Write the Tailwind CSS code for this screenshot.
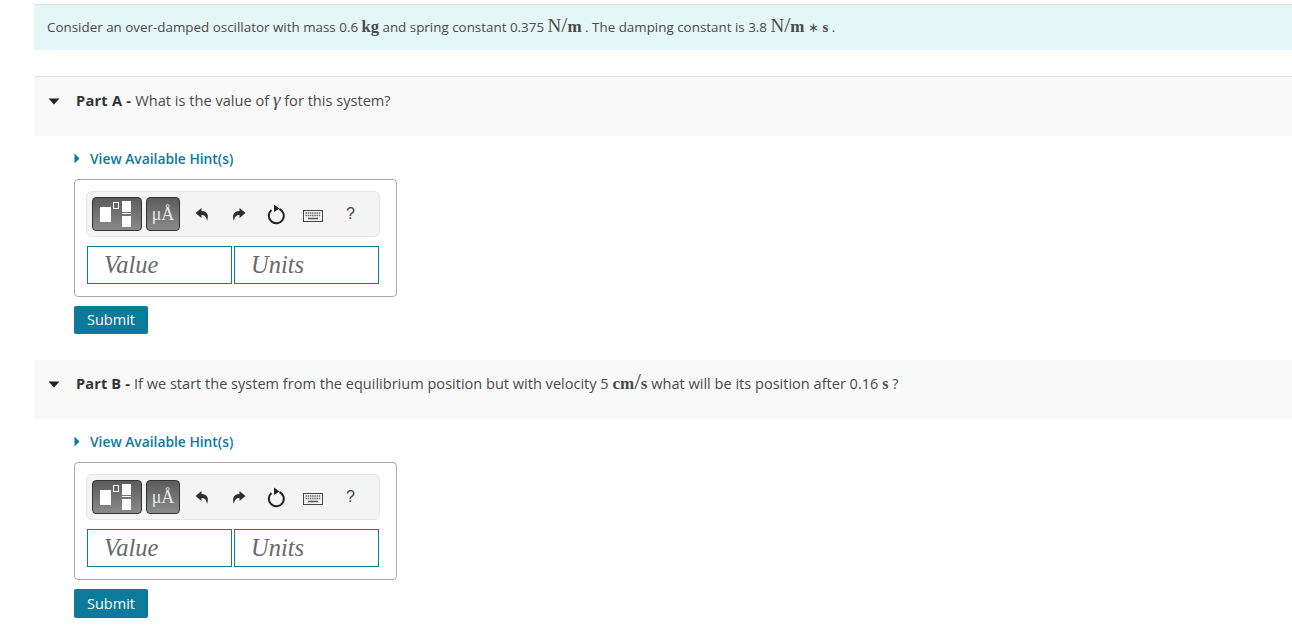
<!DOCTYPE html>
<html lang="en">
<head>
<meta charset="UTF-8">
<title>Over-damped oscillator</title>
<script src="https://cdn.jsdelivr.net/npm/@tailwindcss/browser@4"></script>
</head>
<body class="bg-white overflow-hidden font-['Open_Sans',sans-serif] text-[13.4px] text-[#4a4a4a]">
<main class="pl-[34px] pt-[4px]">

  <!-- problem intro -->
  <div class="h-[46px] border-t border-[#e0e0e0] bg-[#e5f6f6] pl-[13px] pb-[2px] flex items-center">
    <p class="whitespace-pre leading-[20px]">Consider an over-damped oscillator with mass 0.6 <span class="font-['Liberation_Serif',serif] text-[16.5px] font-bold">kg</span> and spring constant 0.375 <span class="font-['Liberation_Serif',serif] text-[19px]">N<span class="text-[22px] font-light">/</span><span class="font-bold text-[17px]">m</span></span> . The damping constant is 3.8 <span class="font-['Liberation_Serif',serif] text-[19px]">N<span class="text-[22px]">/</span><span class="font-bold text-[17px]">m</span></span> <span class="font-['Liberation_Serif',serif] text-[13px]">∗</span> <span class="font-['Liberation_Serif',serif] font-bold text-[15px]">s</span> .</p>
  </div>

  <!-- part A -->
  <section class="mt-[26px]">
    <div class="h-[60px] border-t border-[#e0e0e0] bg-[#f8f8f8] flex items-start pt-[13px]">
      <svg class="ml-[14px] mt-[8px] w-[12px] h-[7px]" viewBox="0 0 12 7"><path d="M0.5 0.5H11.5L6 6.5Z" fill="#222"/></svg>
      <p class="ml-[16px] text-[14.6px] leading-[20px] whitespace-pre"><b class="font-bold text-[#333] tracking-[0.25px]">Part A - </b>What is the value of <span class="font-['Liberation_Serif',serif] italic text-[19px] leading-[18px]">γ</span> for this system?</p>
    </div>
    <div class="ml-[40px] mt-[14px] h-[19px] flex items-center">
      <svg class="w-[6px] h-[11px] mb-[3px]" viewBox="0 0 6 11"><path d="M0.5 0.5L5.5 5.5L0.5 10.5Z" fill="#0b7a9b"/></svg>
      <a class="ml-[10px] text-[13.8px] font-semibold text-[#0b7a9b]">View Available Hint(s)</a>
    </div>
    <div class="ml-[40px] mt-[10px] w-[323px] h-[118px] border border-[#a8a8a8] rounded-[4px] pt-[11px] pl-[11px]">
      <div class="w-[294px] h-[46px] border border-[#e4e4e4] rounded-[6px] bg-[#f4f4f4] flex items-center pl-[5px]">
        <div class="w-[50px] h-[34px] rounded-[4px] border border-[#333] bg-gradient-to-b from-[#5c5c5c] to-[#8a8a8a] relative shrink-0">
          <span class="absolute left-[7px] top-[9px] w-[11px] h-[15px] bg-white"></span>
          <span class="absolute left-[20px] top-[4px] w-[6px] h-[7px] border border-white"></span>
          <span class="absolute left-[29px] top-[3px] w-[9px] h-[11px] bg-white"></span>
          <span class="absolute left-[29px] top-[15px] w-[9px] h-[1px] bg-white"></span>
          <span class="absolute left-[29px] top-[18px] w-[9px] h-[11px] bg-white"></span>
        </div>
        <div class="ml-[4px] w-[34px] h-[34px] rounded-[4px] border border-[#333] bg-gradient-to-b from-[#5c5c5c] to-[#8a8a8a] flex items-center justify-center font-['Liberation_Serif',serif] text-[18px] text-[#e8e8e8] shrink-0">μÅ</div>
        <svg class="ml-[15px] mt-[1px] w-[14px] h-[15px] shrink-0" viewBox="0 0 14 15"><path d="M6.5 1L0.5 6L6.5 11V8C9.5 8 11.5 9.500 12 14C14 9 13 4.200 6.500 4Z" fill="#2e2e2e"/></svg>
        <svg class="ml-[23px] mt-[1px] w-[14px] h-[15px] shrink-0" viewBox="0 0 14 15"><path d="M7.500 1L13.500 6L7.500 11V8C4.500 8 2.500 9.500 2 14C0 9 1 4.200 7.500 4Z" fill="#2e2e2e"/></svg>
        <svg class="ml-[21px] mt-[1px] w-[18px] h-[21px] shrink-0" viewBox="0 0 18 21" fill="none"><path d="M4.500 6A7.500 7.500 0 1 0 12.500 5" stroke="#222" stroke-width="2"/><path d="M7 0.500L12.500 4.500L7 8Z" fill="#222"/></svg>
        <svg class="ml-[18px] mt-[3px] w-[20px] h-[12px] shrink-0" viewBox="0 0 20 12" fill="none"><rect x="0.500" y="0.500" width="19" height="11" fill="#f4f4f4" stroke="#444"/><path d="M2.500 3H17.500M2.500 5.500H17.500" stroke="#666" stroke-width="1.500" stroke-dasharray="1.500 0.700"/><path d="M5 8.500H15" stroke="#555" stroke-width="1.500"/></svg>
        <span class="ml-[23px] text-[16px] leading-none text-[#444] font-['Liberation_Sans',sans-serif]">?</span>
      </div>
      <div class="mt-[9px] ml-[1px] flex gap-[2px]">
        <div class="w-[145px] h-[38px] border border-[#0b7a9b] pl-[16px] flex items-center font-['Liberation_Serif',serif] italic text-[24.5px] text-[#6a6a6a]">Value</div>
        <div class="w-[145px] h-[38px] border border-[#0b7a9b] pl-[16px] flex items-center font-['Liberation_Serif',serif] italic text-[24.5px] text-[#6a6a6a]">Units</div>
      </div>
    </div>
    <button class="ml-[40px] mt-[9px] block w-[74px] h-[28px] rounded-[2px] bg-[#0b7a9b] text-white text-[14.5px] font-medium">Submit</button>
  </section>

  <!-- part B -->
  <section class="mt-[26px]">
    <div class="h-[59px] bg-[#f8f8f8] flex items-start pt-[12px]">
      <svg class="ml-[14px] mt-[9px] w-[12px] h-[7px]" viewBox="0 0 12 7"><path d="M0.5 0.5H11.5L6 6.5Z" fill="#222"/></svg>
      <p class="ml-[16px] text-[14.55px] leading-[20px] whitespace-pre"><b class="font-bold text-[#333] tracking-[0.15px]">Part B - </b>If we start the system from the equilibrium position but with velocity 5 <span class="font-['Liberation_Serif',serif] leading-[18px]"><span class="font-bold text-[17px]">cm</span><span class="text-[24px]">/</span><span class="font-bold text-[17px]">s</span></span> what will be its position after 0.16 <span class="font-['Liberation_Serif',serif] font-bold text-[16px] leading-[18px]">s</span> ?</p>
    </div>
    <div class="ml-[40px] mt-[14px] h-[19px] flex items-center">
      <svg class="w-[6px] h-[11px] mb-[3px]" viewBox="0 0 6 11"><path d="M0.5 0.5L5.5 5.5L0.5 10.5Z" fill="#0b7a9b"/></svg>
      <a class="ml-[10px] text-[13.8px] font-semibold text-[#0b7a9b]">View Available Hint(s)</a>
    </div>
    <div class="ml-[40px] mt-[10px] w-[323px] h-[118px] border border-[#a8a8a8] rounded-[4px] pt-[11px] pl-[11px]">
      <div class="w-[294px] h-[46px] border border-[#e4e4e4] rounded-[6px] bg-[#f4f4f4] flex items-center pl-[5px]">
        <div class="w-[50px] h-[34px] rounded-[4px] border border-[#333] bg-gradient-to-b from-[#5c5c5c] to-[#8a8a8a] relative shrink-0">
          <span class="absolute left-[7px] top-[9px] w-[11px] h-[15px] bg-white"></span>
          <span class="absolute left-[20px] top-[4px] w-[6px] h-[7px] border border-white"></span>
          <span class="absolute left-[29px] top-[3px] w-[9px] h-[11px] bg-white"></span>
          <span class="absolute left-[29px] top-[15px] w-[9px] h-[1px] bg-white"></span>
          <span class="absolute left-[29px] top-[18px] w-[9px] h-[11px] bg-white"></span>
        </div>
        <div class="ml-[4px] w-[34px] h-[34px] rounded-[4px] border border-[#333] bg-gradient-to-b from-[#5c5c5c] to-[#8a8a8a] flex items-center justify-center font-['Liberation_Serif',serif] text-[18px] text-[#e8e8e8] shrink-0">μÅ</div>
        <svg class="ml-[15px] mt-[1px] w-[14px] h-[15px] shrink-0" viewBox="0 0 14 15"><path d="M6.5 1L0.5 6L6.5 11V8C9.5 8 11.5 9.500 12 14C14 9 13 4.200 6.500 4Z" fill="#2e2e2e"/></svg>
        <svg class="ml-[23px] mt-[1px] w-[14px] h-[15px] shrink-0" viewBox="0 0 14 15"><path d="M7.500 1L13.500 6L7.500 11V8C4.500 8 2.500 9.500 2 14C0 9 1 4.200 7.500 4Z" fill="#2e2e2e"/></svg>
        <svg class="ml-[21px] mt-[1px] w-[18px] h-[21px] shrink-0" viewBox="0 0 18 21" fill="none"><path d="M4.500 6A7.500 7.500 0 1 0 12.500 5" stroke="#222" stroke-width="2"/><path d="M7 0.500L12.500 4.500L7 8Z" fill="#222"/></svg>
        <svg class="ml-[18px] mt-[3px] w-[20px] h-[12px] shrink-0" viewBox="0 0 20 12" fill="none"><rect x="0.500" y="0.500" width="19" height="11" fill="#f4f4f4" stroke="#444"/><path d="M2.500 3H17.500M2.500 5.500H17.500" stroke="#666" stroke-width="1.500" stroke-dasharray="1.500 0.700"/><path d="M5 8.500H15" stroke="#555" stroke-width="1.500"/></svg>
        <span class="ml-[23px] text-[16px] leading-none text-[#444] font-['Liberation_Sans',sans-serif]">?</span>
      </div>
      <div class="mt-[9px] ml-[1px] flex gap-[2px]">
        <div class="w-[145px] h-[38px] border border-[#0b7a9b] pl-[16px] flex items-center font-['Liberation_Serif',serif] italic text-[24.5px] text-[#6a6a6a]">Value</div>
        <div class="w-[145px] h-[38px] border border-[#0b7a9b] pl-[16px] flex items-center font-['Liberation_Serif',serif] italic text-[24.5px] text-[#6a6a6a]">Units</div>
      </div>
    </div>
    <button class="ml-[40px] mt-[9px] block w-[74px] h-[29px] rounded-[2px] bg-[#0b7a9b] text-white text-[14.5px] font-medium">Submit</button>
  </section>

</main>
</body>
</html>
